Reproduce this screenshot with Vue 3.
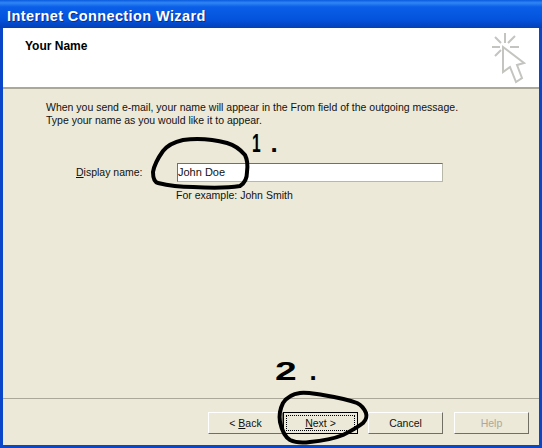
<script setup>
const buttons = [
  { label: 'ack', key: 'B', before: '< ', after: '', cls: 'btn btn-back' },
  { label: 'ext', key: 'N', before: '', after: ' >', cls: 'btn btn-default' },
  { label: 'Cancel', key: '', before: '', after: '', cls: 'btn' },
  { label: 'Help', key: '', before: '', after: '', cls: 'btn btn-disabled' },
]
</script>

<template>
  <div class="window">
    <div class="titlebar">Internet Connection Wizard</div>
    <div class="frame">
      <div class="header">
        <h1 class="heading">Your Name</h1>
        <svg class="wizard-icon" width="36" height="54" viewBox="0 0 36 54">
          <g stroke="#c4c4c0" stroke-width="2" fill="none">
            <path d="M15 1V11M2 15H10M20 15H29M5 5L11 11M25 4L18 11M5 24L11 18" />
            <path d="M13 15V40L20 35L26 50L32 46L27 33L34 31Z" fill="#fff" />
          </g>
        </svg>
      </div>
      <div class="content">
        <div class="intro">
          <p>When you send e-mail, your name will appear in the From field of the outgoing message.</p>
          <p>Type your name as you would like it to appear.</p>
        </div>
        <div class="field">
          <label class="field-label"><u>D</u>isplay name:</label>
          <div class="field-input">John Doe</div>
        </div>
        <div class="hint">For example: John Smith</div>
      </div>
      <div class="footer">
        <div v-for="b in buttons" :key="b.label" :class="b.cls">
          <span class="btn-text">{{ b.before }}<u v-if="b.key">{{ b.key }}</u>{{ b.label }}{{ b.after }}</span>
        </div>
      </div>
    </div>

    <svg class="scribble" width="542" height="448" viewBox="0 0 542 448">
      <g fill="none" stroke="#000" stroke-width="4" stroke-linecap="round" stroke-linejoin="round">
        <path d="M183 140C174 142 167 146 163 151C158 158 154 166 153 172C153 178 154 182 158 183C170 186 182 187 193 187C210 188 228 188 240 186C245 183 247 178 247 172C248 165 247 159 245 155C240 149 234 145 227 143C212 139 197 138 183 140Z" />
        <path d="M300 393C292 394 287 397 283 403C280 409 279 416 280 422C282 431 285 437 290 440C296 443 303 443 310 442C322 441 333 439 343 435C351 431 358 427 363 423C366 420 367 416 366 413C364 408 361 405 357 403C347 399 335 397 323 395C315 394 307 392 300 393Z" />
      </g>
    </svg>
    <span class="mark mark-one"><span class="digit-one">1</span>.</span>
    <span class="mark mark-two"><span class="digit-two">2</span>.</span>
  </div>
</template>

<style scoped>
.window {
  position: relative;
  width: 542px;
  height: 448px;
  display: flex;
  flex-direction: column;
  background: #0a47c8;
  font-family: "Liberation Sans", Arial, sans-serif;
  overflow: hidden;
}

.titlebar {
  height: 28px;
  box-sizing: border-box;
  padding: 9px 0 0 7px;
  background: linear-gradient(180deg, #0a5be0 0%, #2f86f5 10%, #0a5ee8 25%, #0453dc 70%, #0340b8 100%);
  color: #fff;
  font-size: 14.5px;
  font-weight: bold;
  line-height: 14px;
  letter-spacing: 0.4px;
  text-shadow: 1px 1px 0 #0a2f90;
}

.frame {
  flex: 1;
  margin: 0 3px 3px;
  display: flex;
  flex-direction: column;
  background: #ece9d8;
}

.header {
  height: 59px;
  display: flex;
  justify-content: space-between;
  background: #fff;
  border-bottom: 2px solid #aca899;
}

.heading {
  margin: 11px 0 0 22px;
  font-size: 12px;
  font-weight: bold;
  line-height: 14px;
}

.wizard-icon {
  margin: 4px 13px 0 0;
}

.content {
  flex: 1;
  padding: 12px 0 0 43px;
  font-size: 10.5px;
  line-height: 13px;
  color: #111;
}

.intro p {
  margin: 0;
}

.field {
  display: flex;
  align-items: center;
  margin-top: 36px;
}

.field-label {
  width: 131px;
  padding-left: 30px;
  box-sizing: border-box;
}

.field-input {
  width: 266px;
  height: 19px;
  box-sizing: border-box;
  padding: 2px 0 0 0;
  background: #fff;
  border: 1px solid #b8b8a8;
  border-top-color: #70706a;
  border-left-color: #70706a;
  font-size: 11px;
}

.hint {
  margin: 7px 0 0 130px;
}

.footer {
  height: 47px;
  box-sizing: border-box;
  border-top: 1px solid #aca899;
  display: flex;
  justify-content: flex-end;
  gap: 10px;
  padding: 13px 10px 0 0;
}

.btn {
  width: 75px;
  height: 22px;
  box-sizing: border-box;
  display: flex;
  align-items: center;
  justify-content: center;
  background: #ece9d8;
  border: 1px solid;
  border-color: #fff #716f64 #716f64 #fff;
  font-size: 10.5px;
  color: #111;
  white-space: pre;
}

.btn-back {
  margin-right: -10px;
}

.btn-default {
  border-color: #000;
  outline: 1px dotted #000;
  outline-offset: -4px;
}

.btn-disabled {
  margin-left: 1px;
  color: #aca899;
}

.scribble {
  position: absolute;
  top: 0;
  left: 0;
  pointer-events: none;
}

.mark {
  position: absolute;
  color: #000;
  font-weight: bold;
  font-size: 26px;
  line-height: 26px;
}

.mark-one {
  left: 252px;
  top: 130px;
}

.mark-two {
  left: 275px;
  top: 358px;
}

.digit-one {
  display: inline-block;
  margin-right: 4px;
  transform: scaleX(0.6);
  transform-origin: left;
}

.digit-two {
  display: inline-block;
  margin-right: 20px;
  transform: scaleX(1.5);
  transform-origin: left;
}
</style>
